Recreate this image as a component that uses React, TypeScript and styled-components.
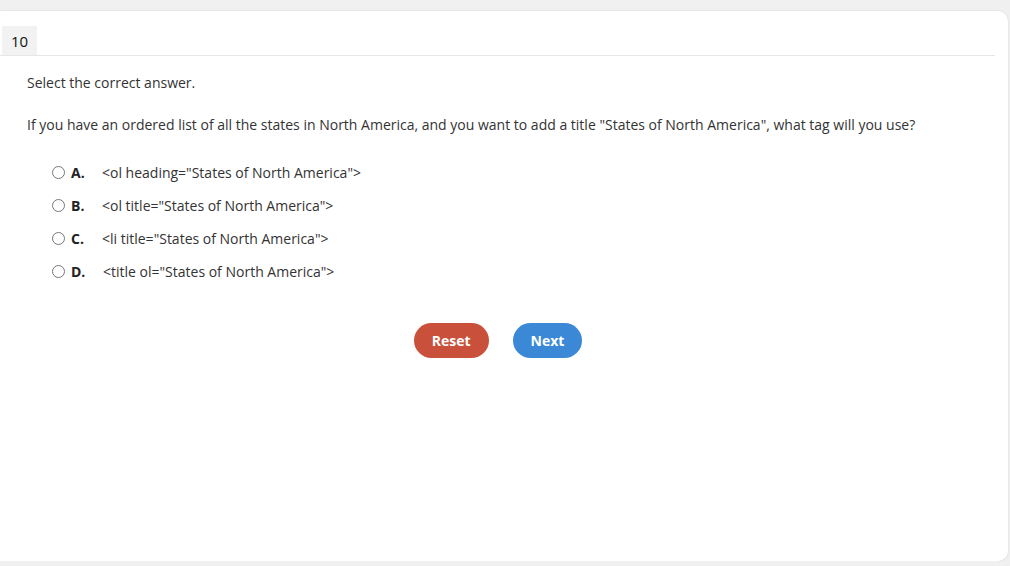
import React, {FC, useState} from 'react';
import styled, {createGlobalStyle} from 'styled-components';

const GlobalStyle = createGlobalStyle`
html,body{
margin:0;
padding:0;
background:#f0f0f0;
font-family:"Open Sans","Noto Sans",Arial,sans-serif;
color:#333;
}
`

const options = [
    {letter: 'A.', text: '<ol heading="States of North America">', shift: 0},
    {letter: 'B.', text: '<ol title="States of North America">', shift: 0},
    {letter: 'C.', text: '<li title="States of North America">', shift: 0},
    {letter: 'D.', text: '<title ol="States of North America">', shift: 1},
]

const App: FC = () => {
    const [picked, setPicked] = useState<number | null>(null)
    return (
        <>
            <GlobalStyle/>
            <Card>
                <Header>
                    <Number>10</Number>
                </Header>
                <Body>
                    <Prompt>Select the correct answer.</Prompt>
                    <Question>
                        If you have an ordered list of all the states in North America, and you want to add a title "States of North America", what tag will you use?
                    </Question>
                    <Options>
                        {options.map(({letter, text, shift}, i) => (
                            <Option key={letter} onClick={() => setPicked(i)}>
                                <Radio checked={picked === i}/>
                                <Letter>{letter}</Letter>
                                <OptionText shift={shift}>{text}</OptionText>
                            </Option>
                        ))}
                    </Options>
                    <Actions>
                        <Button variant="reset" onClick={() => setPicked(null)}>Reset</Button>
                        <Button variant="next">Next</Button>
                    </Actions>
                </Body>
            </Card>
        </>
    );
};

const Card = styled.div`
margin:11px 2px 0 0;
height:550px;
background:#fff;
border-radius:0 10px 10px 0;
box-shadow:0 0 2px rgba(0,0,0,0.12);
box-sizing:border-box;
`

const Header = styled.div`
padding-top:15px;
margin-right:13px;
border-bottom:1px solid #e6e6e6;
display:flex;
`

const Number = styled.div`
margin-left:2px;
width:35px;
height:29px;
background:#f2f2f2;
font-size:15px;
color:#111;
display:flex;
align-items:center;
justify-content:center;
`

const Body = styled.div`
padding:17px 0 0 27px;
font-size:14px;
line-height:20px;
`

const Prompt = styled.div`
color:#333;
`

const Question = styled.div`
margin-top:22px;
`

const Options = styled.div`
margin-top:28px;
padding-left:25px;
display:flex;
flex-direction:column;
gap:13px;
`

const Option = styled.div`
display:flex;
align-items:center;
height:20px;
cursor:pointer;
`

const Radio = styled.span<{checked?: boolean}>`
width:11px;
height:11px;
border:1px solid #777;
border-radius:50%;
box-sizing:content-box;
background:${(props) => props.checked ? "radial-gradient(circle,#333 0 3px,#fff 3.5px)" : "#fff"};
margin-top:-2px;
`

const Letter = styled.span`
margin-left:6px;
width:31px;
font-weight:700;
color:#222;
`

const OptionText = styled.span<{shift: number}>`
margin-left:${(props) => props.shift}px;
white-space:pre;
`

const Actions = styled.div`
margin-top:41px;
padding-right:39px;
display:flex;
justify-content:center;
gap:24px;
`

const Button = styled.button<{variant: 'reset' | 'next'}>`
height:35px;
padding:0 18px;
border:none;
border-radius:18px;
background:${(props) => props.variant === 'reset' ? "#c9503a" : "#3b89d6"};
color:#fff;
font-family:"Open Sans","Noto Sans",Arial,sans-serif;
font-weight:700;
font-size:14px;
cursor:pointer;
`

export default App;
